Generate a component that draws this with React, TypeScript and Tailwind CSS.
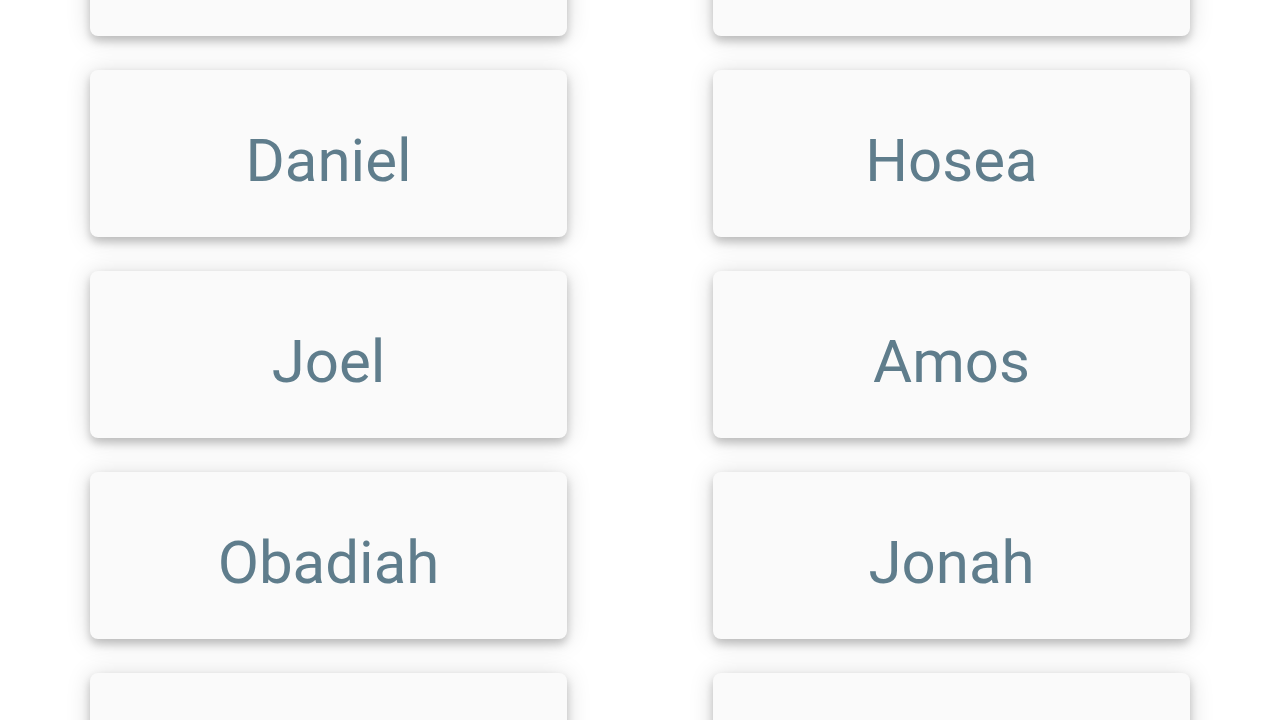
const books = [
  "",
  "",
  "Daniel",
  "Hosea",
  "Joel",
  "Amos",
  "Obadiah",
  "Jonah",
  "",
  "",
];

function BookCard({ name }: { name: string }) {
  return (
    <div className="flex h-[167px] items-center justify-center rounded-[8px] bg-[#fafafa] shadow-[0_5px_8px_rgba(0,0,0,0.2),0_2px_24px_rgba(0,0,0,0.15)]">
      {name && <span className="pt-[14px] text-[60px] leading-none text-[#5f7d8c]">{name}</span>}
    </div>
  );
}

export default function App() {
  return (
    <div
      className="h-[720px] w-[1280px] overflow-hidden bg-white"
      style={{ fontFamily: "Roboto, 'Liberation Sans', sans-serif" }}
    >
      <div className="-mt-[131px] grid grid-cols-2 gap-x-[146px] gap-y-[34px] px-[90px]">
        {books.map((b, i) => (
          <BookCard key={i} name={b} />
        ))}
      </div>
    </div>
  );
}
